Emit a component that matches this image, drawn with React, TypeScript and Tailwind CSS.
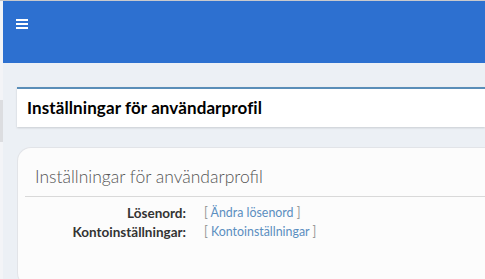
import React from "react";

export default function App() {
  const font = { fontFamily: '"Source Sans Pro", Lato, "Noto Sans", sans-serif' };
  return (
    <div className="w-[485px] h-[279px] overflow-hidden bg-[#ecf0f5] flex flex-col" style={font}>
      <div className="h-px bg-[#c9c9cc] shrink-0" />
      <div className="flex flex-1 min-h-0">
        <div className="w-[3px] shrink-0 bg-[#f3f4f7] flex flex-col">
          <div className="h-[99px]" />
          <div className="h-[42px] bg-[#dcdde0]" />
        </div>
        <div className="flex-1 flex flex-col min-w-0">
          <div className="h-[62px] bg-[#2d70d0] shrink-0 px-[13px] pt-[18px]">
            <div className="w-[12px] flex flex-col gap-[2px]">
              <div className="h-[2px] bg-white" />
              <div className="h-[2px] bg-white" />
              <div className="h-[2px] bg-white" />
            </div>
          </div>
          <div className="pl-[14px] pt-[24px] flex flex-col">
            <div className="h-[40px] bg-white border-t-2 border-[#5a8eb8] shadow-[0_1px_2px_rgba(0,0,0,0.15)] flex items-center pl-[10px]">
              <span className="text-[17px] font-bold text-black tracking-[0.1px]">Inställningar för användarprofil</span>
            </div>
            <div className="mt-[20px] h-[140px] bg-[#fcfcfc] border border-[#e2e4e8] rounded-tl-[14px] rounded-bl-[14px] border-r-0 flex flex-col">
              <div className="h-[49px] flex items-end pb-[8px] pl-[10px] border-b border-[#d9d9d9] ml-[7px]">
                <span className="text-[17.5px] leading-[22px] font-light text-[#555]">Inställningar för användarprofil</span>
              </div>
              <div className="pt-[8px] grid grid-cols-[168px_1fr] gap-x-[18px] gap-y-[3px] text-[13.5px] leading-[16px]">
                <div className="text-right font-bold text-[#333]">Lösenord:</div>
                <div className="text-[#999] text-[12.4px]">[ <span className="text-[#5b8ec0]">Ändra lösenord</span> ]</div>
                <div className="text-right font-bold text-[#333]">Kontoinställningar:</div>
                <div className="text-[#999] text-[12.4px]">[ <span className="text-[#5b8ec0]">Kontoinställningar</span> ]</div>
              </div>
            </div>
          </div>
        </div>
      </div>
    </div>
  );
}
